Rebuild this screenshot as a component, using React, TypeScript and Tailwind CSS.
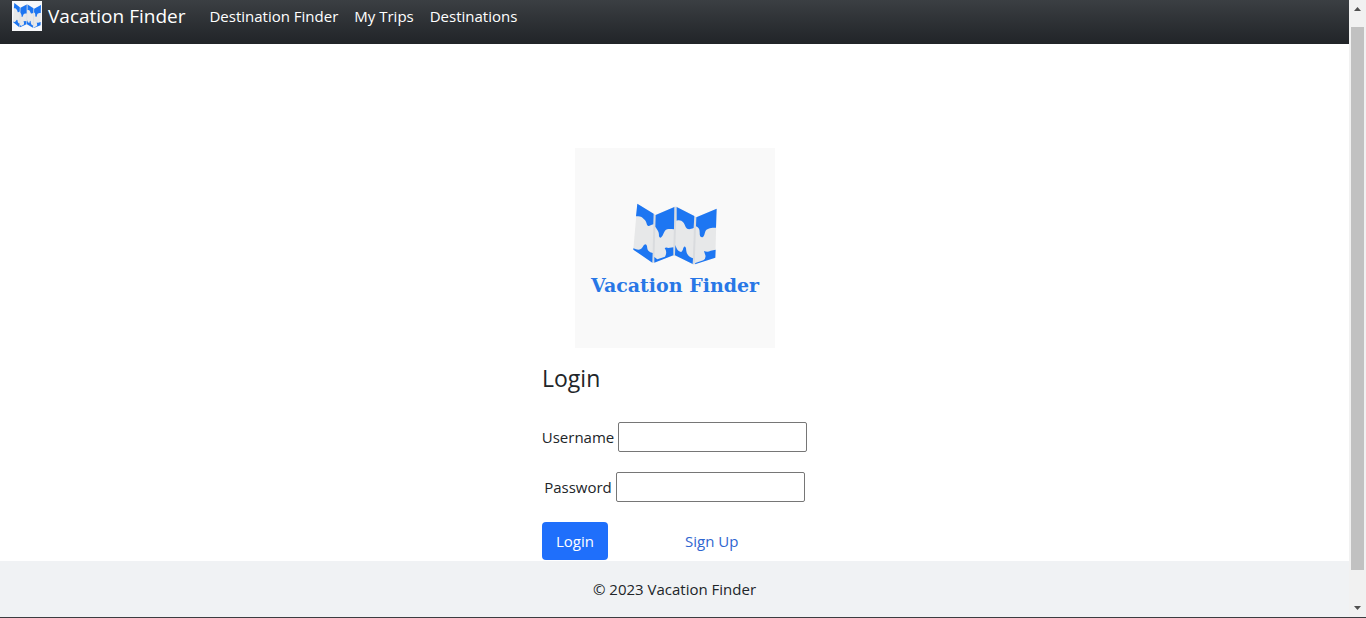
function MapDrawing() {
  return (
    <>
      <g fill="#e7e8e9">
        <path d="M52 26 L101 56 L98 203 L40 163 Z" />
        <path d="M101 58 L106 60 L163 36 L160 182 L98 203 Z" />
        <path d="M163 35 L170 35 L223 63 L220 207 L161 181 Z" />
        <path d="M223 64 L229 67 L290 41 L286 188 L218 209 Z" />
      </g>
      <g fill="#d9dbde">
        <path d="M101 56 L107 60 L103 203 L97 203 Z" />
        <path d="M163 35 L170 35 L165 182 L159 182 Z" />
        <path d="M223 64 L229 67 L224 208 L218 208 Z" />
      </g>
      <g fill="#1d76f2">
        <path d="M52 26 L101 56 L100 88 C90 91 85 97 81 89 C78 80 76 75 72 73 C66 65 60 62 48 64 Z" />
        <path d="M40 160 C55 167 62 165 68 156 Q73 145 79 149 C83 153 80 162 85 167 Q90 173 98 174 L97 203 L40 164 Z" />
        <path d="M107 60 L163 36 L162 103 C150 102 141 101 135 107 C130 114 130 120 125 125 Q120 132 117 124 C118 110 113 107 106 95 Z" />
        <path d="M103 186 L112 193 L135 185 C140 176 140 168 134 160 Q137 156 145 159 L160 157 L160 181 L103 203 Z" />
        <path d="M170 36 L223 63 L221 99 C208 104 202 104 197 96 C193 84 185 72 170 77 Z" />
        <path d="M166 150 C170 162 175 170 184 171 Q189 167 190 159 Q195 150 198 160 C199 178 204 184 219 190 L218 207 L165 181 Z" />
        <path d="M229 67 L290 41 L288 98 C274 98 263 99 257 107 C253 115 254 124 247 127 C240 127 239 122 239 112 C239 102 236 97 228 94 Z" />
        <path d="M252 168 Q263 173 272 167 L287 164 L286 188 L225 208 L226 204 L250 196 Q260 188 255 178 Z" />
      </g>
    </>
  );
}

function BrandMark() {
  return (
    <svg className="size-[30px] shrink-0" viewBox="0 0 30 30" aria-hidden="true">
      <rect width="30" height="30" fill="#f7f8fa" />
      <g transform="translate(-3.5 -1.5) scale(0.112 0.137)">
        <MapDrawing />
      </g>
    </svg>
  );
}

function Logo() {
  return (
    <svg className="size-[200px]" viewBox="0 0 200 200" role="img" aria-label="Vacation Finder">
      <rect width="200" height="200" fill="#f9f9f9" />
      <g transform="translate(45 47) scale(0.3333)">
        <MapDrawing />
      </g>
      <text
        x="100"
        y="144"
        textAnchor="middle"
        fill="#2877e6"
        className="font-['DejaVu_Serif',serif] text-[19px] font-bold"
      >
        Vacation Finder
      </text>
    </svg>
  );
}

function ScrollRail() {
  return (
    <div className="flex w-[17px] shrink-0 flex-col items-center justify-between bg-[#f1f1f1]" aria-hidden="true">
      <svg className="h-[27px] w-[17px] shrink-0" viewBox="0 0 17 27">
        <path d="M5 11 L8.500 7 L12 11 Z" fill="#505050" />
      </svg>
      <div className="w-[13px] grow bg-[#c1c1c1]" />
      <svg className="h-[47px] w-[17px] shrink-0" viewBox="0 0 17 47">
        <path d="M5 36 L8.500 40 L12 36 Z" fill="#505050" />
      </svg>
    </div>
  );
}

const links = ["Destination Finder", "My Trips", "Destinations"];

export default function App() {
  return (
    <div className="flex min-h-screen border-b border-[#3c3c40] bg-white font-['Open_Sans','Noto_Sans',sans-serif] text-[15px] leading-6 text-[#212529]">
      <div className="flex min-w-0 grow flex-col">
        <nav className="flex h-11 items-start bg-linear-to-b from-[#3b3f43] to-[#212428] px-3 text-white">
          <a href="#" className="flex items-center gap-1.5 text-[19px] leading-8">
            <BrandMark />
            Vacation Finder
          </a>
          <ul className="ml-6 flex gap-4 pt-1">
            {links.map((label) => (
              <li key={label}>
                <a href="#">{label}</a>
              </li>
            ))}
          </ul>
        </nav>

        <main className="flex grow flex-col items-center pt-[104px]">
          <Logo />
          <form className="flex w-[265px] flex-col pt-3" onSubmit={(e) => e.preventDefault()}>
            <h1 className="text-[23px] leading-9">Login</h1>
            <div className="mt-[26px] flex items-center justify-center gap-1">
              <label htmlFor="username">Username</label>
              <input id="username" type="text" className="h-[30px] w-[189px] rounded-xs border border-[#767676] bg-white px-1" />
            </div>
            <div className="mt-5 flex items-center justify-center gap-1">
              <label htmlFor="password">Password</label>
              <input id="password" type="password" className="h-[30px] w-[189px] rounded-xs border border-[#767676] bg-white px-1" />
            </div>
            <div className="mt-5 flex items-center">
              <button type="submit" className="h-[38px] w-[66px] rounded bg-[#1f6ffb] text-white">
                Login
              </button>
              <a href="#" className="ml-[77px] text-[#2f66d0]">
                Sign Up
              </a>
            </div>
          </form>
        </main>

        <footer className="mt-px bg-[#f0f2f4] py-4 text-center">© 2023 Vacation Finder</footer>
      </div>
      <ScrollRail />
    </div>
  );
}
